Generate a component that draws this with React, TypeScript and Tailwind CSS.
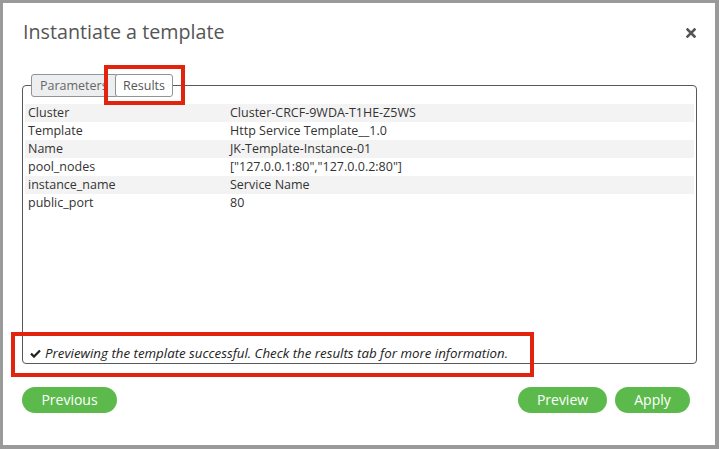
const rows: Array<[string, string]> = [
  ["Cluster", "Cluster-CRCF-9WDA-T1HE-Z5WS"],
  ["Template", "Http Service Template__1.0"],
  ["Name", "JK-Template-Instance-01"],
  ["pool_nodes", '["127.0.0.1:80","127.0.0.2:80"]'],
  ["instance_name", "Service Name"],
  ["public_port", "80"],
];

function CloseIcon() {
  return (
    <svg width="10" height="10" viewBox="0 0 10 10" className="text-[#555]">
      <path d="M1.5 1.5 L8.5 8.5 M8.5 1.5 L1.5 8.5" stroke="currentColor" strokeWidth="2.6" strokeLinecap="square" />
    </svg>
  );
}

function CheckIcon() {
  return (
    <svg width="11" height="9" viewBox="0 0 11 9" className="text-[#222]">
      <path d="M1 4.6 L4 7.6 L10 1.4" fill="none" stroke="currentColor" strokeWidth="2.2" />
    </svg>
  );
}

export default function App() {
  return (
    <div className="relative h-[449px] w-[719px] bg-[#9a9a9a] pl-[3px] pt-[3px] font-['Open_Sans',sans-serif]">
      <div className="h-[442px] w-[712px] bg-white px-[19px] pt-[15px]">
        <div className="flex items-center justify-between">
          <h1 className="pl-[1px] text-[19.7px] leading-[28px] font-normal text-[#555]">Instantiate a template</h1>
          <button type="button" className="mt-[2px] flex h-[10px] w-[10px] items-center justify-center">
            <CloseIcon />
          </button>
        </div>

        <fieldset className="mt-[28px] w-[675px] rounded-[4px] border border-[#565a5a]">
          <legend className="ml-[8px] flex">
            <span className="h-[23px] w-[88px] overflow-hidden rounded-[3px] border border-[#8f9495] bg-[#eceef0] pl-[8px] text-[12.5px] leading-[21px] whitespace-nowrap text-[#666]">
              Parameters
            </span>
            <span className="relative z-10 -ml-[4px] h-[23px] w-[58px] rounded-[3px] border border-[#8f9495] bg-white text-center text-[12.5px] leading-[21px] text-[#555]">
              Results
            </span>
          </legend>
          <div className="flex h-[266px] flex-col justify-between px-[2px] pt-[7px] pb-[2px]">
            <div>
              {rows.map(([label, value], i) => (
                <div
                  key={label}
                  className={`grid h-[18px] grid-cols-[205px_1fr] text-[12.5px] leading-[18px] text-[#333] ${i % 2 === 0 ? "bg-[#f3f3f3]" : "bg-white"}`}
                >
                  <span className="pl-[3px]">{label}</span>
                  <span>{value}</span>
                </div>
              ))}
            </div>
            <div className="flex items-center gap-[4px] pl-[5px] text-[13.3px] leading-[16px] text-[#222] italic">
              <CheckIcon />
              <span>Previewing the template successful. Check the results tab for more information.</span>
            </div>
          </div>
        </fieldset>

        <div className="mt-[23px] flex w-[668px] items-center justify-between">
          <button type="button" className="h-[26px] w-[95px] rounded-full bg-[#5cba4d] text-[14px] leading-[26px] text-white">
            Previous
          </button>
          <div className="flex gap-[8px]">
            <button type="button" className="h-[26px] w-[89px] rounded-full bg-[#5cba4d] text-[14px] leading-[26px] text-white">
              Preview
            </button>
            <button type="button" className="h-[26px] w-[75px] rounded-full bg-[#5cba4d] text-[14px] leading-[26px] text-white">
              Apply
            </button>
          </div>
        </div>
      </div>

      <div className="pointer-events-none absolute top-[65px] left-[104px] h-[40px] w-[81px] border-4 border-[#e2240f]" />
      <div className="pointer-events-none absolute top-[332px] left-[11px] h-[45px] w-[523px] border-4 border-[#e2240f]" />
    </div>
  );
}
